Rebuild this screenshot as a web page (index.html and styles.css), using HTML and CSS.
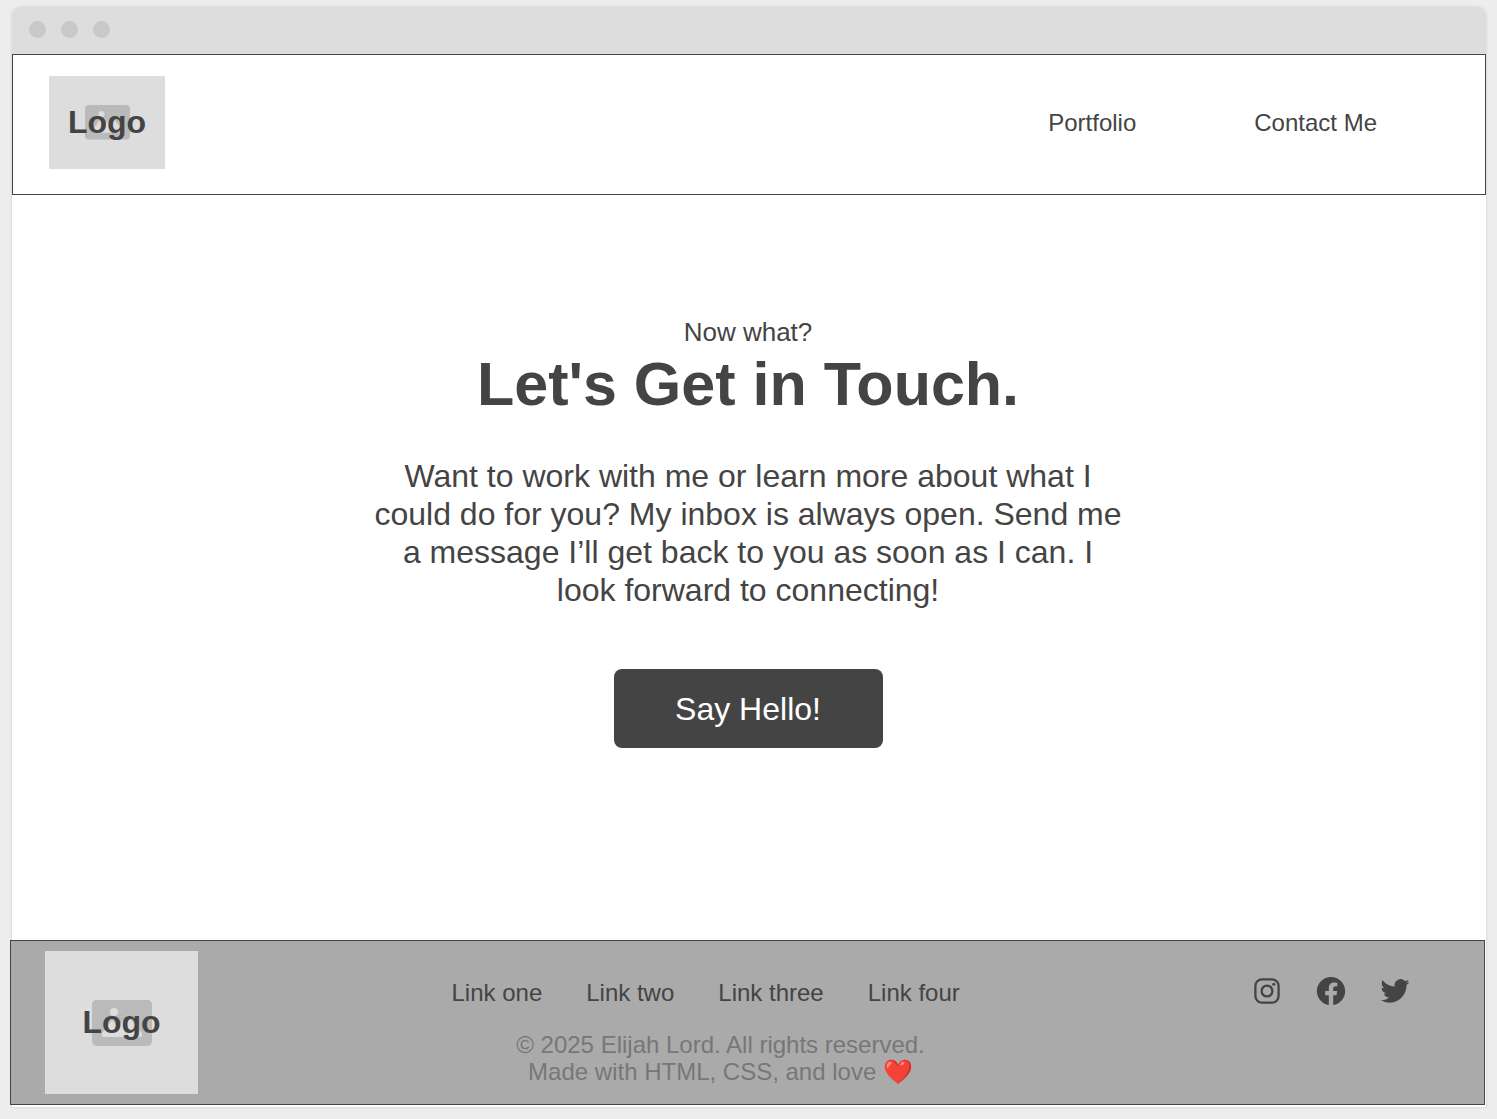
FILE: index.html
```html
<!DOCTYPE html>
<html lang="en">
<head>
  <meta charset="utf-8">
  <meta name="viewport" content="width=device-width, initial-scale=1">
  <title>Elijah Lord – Contact</title>
  <link rel="stylesheet" href="styles.css">
</head>
<body>
  <div class="window">
    <div class="titlebar" aria-hidden="true">
      <span class="dot"></span><span class="dot"></span><span class="dot"></span>
    </div>

    <header class="header">
      <a class="logo" href="#">
        <svg class="logo-picture" viewBox="0 0 60 46" aria-hidden="true">
          <path fill="#bababa" fill-rule="evenodd" d="M5 0H55Q60 0 60 5V41Q60 46 55 46H5Q0 46 0 41V5Q0 0 5 0ZM22 8a4 4 0 1 0 0 8a4 4 0 1 0 0-8ZM10 36V33L20 20L26 27L35 15L50 33V36Q50 37 48 37H12Q10 37 10 36Z"/>
        </svg>
        <span class="logo-text">Logo</span>
      </a>
      <nav class="nav">
        <a href="#">Portfolio</a>
        <a href="#">Contact Me</a>
      </nav>
    </header>

    <main class="main">
      <p class="kicker">Now what?</p>
      <h1 class="title">Let's Get in Touch.</h1>
      <p class="message">Want to work with me or learn more about what I could do for you? My inbox is always open. Send me a message I’ll get back to you as soon as I can. I look forward to connecting!</p>
      <button class="button" type="button">Say Hello!</button>
    </main>

    <footer class="footer">
      <a class="logo logo-large" href="#">
        <svg class="logo-picture" viewBox="0 0 60 46" aria-hidden="true">
          <path fill="#bababa" fill-rule="evenodd" d="M5 0H55Q60 0 60 5V41Q60 46 55 46H5Q0 46 0 41V5Q0 0 5 0ZM22 8a4 4 0 1 0 0 8a4 4 0 1 0 0-8ZM10 36V33L20 20L26 27L35 15L50 33V36Q50 37 48 37H12Q10 37 10 36Z"/>
        </svg>
        <span class="logo-text">Logo</span>
      </a>
      <div class="footer-center">
        <nav class="footer-links">
          <a href="#">Link one</a>
          <a href="#">Link two</a>
          <a href="#">Link three</a>
          <a href="#">Link four</a>
        </nav>
        <p class="copyright">© 2025 Elijah Lord. All rights reserved.<br>Made with HTML, CSS, and love ❤️</p>
      </div>
      <div class="social">
        <a href="#" aria-label="Instagram">
          <svg viewBox="0 0 24 24"><g fill="none" stroke="#444" stroke-width="1.620"><rect x="3.810" y="3.810" width="16.380" height="16.380" rx="4.600"/><circle cx="12" cy="12" r="3.810"/></g><circle cx="16.800" cy="7.200" r="1.080"/></svg>
        </a>
        <a href="#" aria-label="Facebook">
          <svg viewBox="0 0 24 24"><path d="M12 2.040C6.500 2.040 2 6.530 2 12.060C2 17.060 5.660 21.210 10.440 21.960V14.960H7.900V12.060H10.440V9.850C10.440 7.340 11.930 5.960 14.220 5.960C15.310 5.960 16.450 6.150 16.450 6.150V8.620H15.190C13.950 8.620 13.560 9.390 13.560 10.180V12.060H16.340L15.890 14.960H13.560V21.960A10 10 0 0 0 22 12.060C22 6.530 17.500 2.040 12 2.040Z"/></svg>
        </a>
        <a href="#" aria-label="Twitter">
          <svg viewBox="0 0 24 24"><path d="M22.162 5.656a8.384 8.384 0 0 1-2.402.658A4.196 4.196 0 0 0 21.600 4c-.820.488-1.719.830-2.656 1.015a4.182 4.182 0 0 0-7.126 3.814 11.874 11.874 0 0 1-8.620-4.370 4.168 4.168 0 0 0-.566 2.103c0 1.450.738 2.731 1.860 3.481a4.168 4.168 0 0 1-1.894-.523v.052a4.185 4.185 0 0 0 3.355 4.101 4.210 4.210 0 0 1-1.890.072A4.185 4.185 0 0 0 7.970 16.650a8.394 8.394 0 0 1-6.191 1.732 11.830 11.830 0 0 0 6.410 1.880c7.693 0 11.900-6.373 11.900-11.900 0-.180-.005-.362-.013-.540a8.496 8.496 0 0 0 2.087-2.165z"/></svg>
        </a>
      </div>
    </footer>
  </div>
</body>
</html>
```
FILE: styles.css
```css
* {
  box-sizing: border-box;
}

body {
  display: flex;
  min-height: 100vh;
  margin: 0;
  padding: 7px 11px 12px 12px;
  background: #ededed;
  color: #444;
  font: 24px/27px "Liberation Sans", Arial, sans-serif;
}

a {
  color: inherit;
  text-decoration: none;
}

p,
h1 {
  margin: 0;
}

.window {
  display: flex;
  flex: 1;
  flex-direction: column;
  padding-bottom: 2px;
  border-radius: 8px 8px 0 0;
  background: #fff;
  box-shadow: 0 0 2px 1px #ddd;
}

.titlebar {
  display: flex;
  gap: 15px;
  height: 47px;
  padding: 14px 17px;
  border-radius: 8px 8px 0 0;
  background: #ddd;
}

.dot {
  width: 17px;
  height: 17px;
  border-radius: 50%;
  background: #c9c9c9;
}

.header {
  display: flex;
  justify-content: space-between;
  align-items: flex-start;
  padding: 21px 108px 25px 36px;
  border: 1px solid #444;
}

.logo {
  display: grid;
  place-items: center;
  width: 116px;
  height: 93px;
  background: #ddd;
}

.logo > * {
  grid-area: 1 / 1;
}

.logo-picture {
  width: 45px;
}

.logo-text {
  padding-bottom: 2px;
  font-size: 32px;
  font-weight: 700;
  line-height: 36px;
}

.logo-large {
  width: 153px;
  height: 143px;
}

.logo-large .logo-picture {
  width: 60px;
}

.nav {
  display: flex;
  gap: 118px;
  padding-top: 33px;
}

.main {
  display: flex;
  flex: 1;
  flex-direction: column;
  align-items: center;
  padding: 122px 26px 48px 24px;
  text-align: center;
}

.kicker {
  font-size: 26px;
  line-height: 30px;
}

.title {
  padding-top: 2px;
  font-size: 61px;
  line-height: 70px;
}

.message {
  max-width: 752px;
  padding-top: 38px;
  font-size: 32px;
  line-height: 38px;
}

.button {
  width: 269px;
  height: 79px;
  margin-top: 60px;
  border: 0;
  border-radius: 8px;
  background: #444;
  color: #fff;
  font: 32px/36px "Liberation Sans", Arial, sans-serif;
}

.footer {
  display: grid;
  grid-template-columns: 1fr auto 1fr;
  align-items: start;
  margin: 0 1px 0 -2px;
  padding: 10px 72px 10px 34px;
  border: 1px solid #444;
  background: #aaa;
}

.footer-center {
  display: flex;
  flex-direction: column;
  gap: 25px;
  width: 538px;
  margin-right: 16px;
  padding-top: 28px;
}

.footer-links {
  display: flex;
  gap: 44px;
}

.copyright {
  color: #777;
  text-align: center;
}

.social {
  display: flex;
  justify-content: flex-end;
  gap: 30px;
  padding-top: 23px;
}

.social svg {
  display: block;
  width: 34px;
  height: 34px;
  fill: #444;
}
```
